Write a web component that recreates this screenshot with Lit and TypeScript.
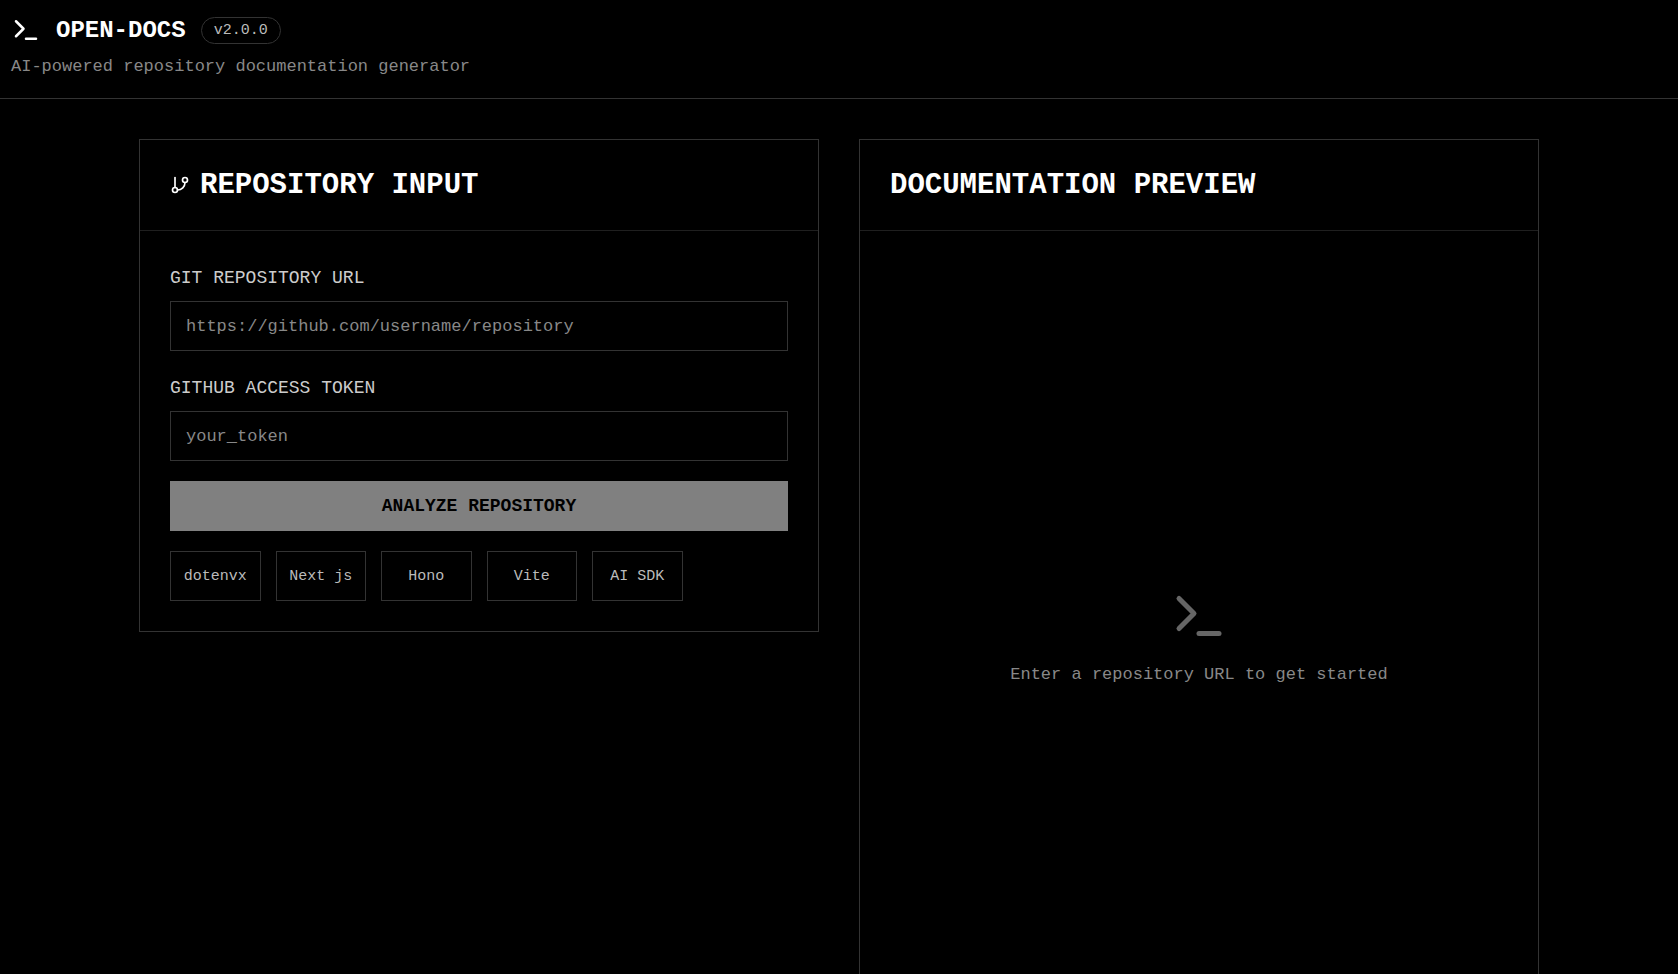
import { LitElement, html, css, svg } from "lit";
import { customElement, state } from "lit/decorators.js";

const terminalPaths = svg`
  <polyline points="4 17 10 11 4 5"></polyline>
  <line x1="12" y1="19" x2="20" y2="19"></line>
`;

const presets = ["dotenvx", "Next js", "Hono", "Vite", "AI SDK"];

@customElement("app-root")
export class AppRoot extends LitElement {
  static styles = css`
    :host {
      display: block;
      min-height: 100vh;
      background: #000;
      color: #fff;
      font-family: "Courier New", "Liberation Mono", monospace;
      font-size: 17px;
      line-height: 25px;
    }
    * {
      box-sizing: border-box;
    }
    h1,
    h2,
    p {
      margin: 0;
    }
    .icon {
      flex: none;
      fill: none;
      stroke: currentColor;
      stroke-width: 2;
      stroke-linecap: round;
      stroke-linejoin: round;
    }
    .icon-brand {
      width: 30px;
      height: 30px;
    }
    .icon-branch {
      width: 20px;
      height: 20px;
    }
    .icon-empty {
      width: 60px;
      height: 60px;
      color: #666;
    }
    .header {
      padding: 14px 11px 19px;
      border-bottom: 1px solid #333;
    }
    .brand {
      display: flex;
      align-items: center;
      gap: 15px;
    }
    .brand-name {
      padding-top: 2px;
      font-size: 24px;
      line-height: 30px;
    }
    .version {
      padding: 0 12px;
      border: 1px solid #333;
      border-radius: 14px;
      color: #bbb;
      font-size: 15px;
    }
    .tagline {
      margin-top: 8px;
      color: #888;
    }
    .main {
      display: grid;
      grid-template-columns: 1fr 1fr;
      align-items: start;
      gap: 40px;
      width: 100%;
      max-width: 1480px;
      margin: 0 auto;
      padding: 40px;
    }
    .card {
      min-width: 0;
      border: 1px solid #333;
    }
    .card-head {
      display: flex;
      align-items: center;
      gap: 10px;
      padding: 29px 30px;
      border-bottom: 1px solid #1f1f1f;
    }
    .card-title {
      padding-top: 2px;
      font-size: 29px;
      line-height: 30px;
    }
    .card-body {
      padding: 30px;
    }
    .form {
      display: flex;
      flex-direction: column;
      gap: 20px;
    }
    .field {
      display: flex;
      flex-direction: column;
      gap: 10px;
      padding-top: 5px;
    }
    .label {
      color: #ccc;
      font-size: 18px;
    }
    .input {
      width: 100%;
      height: 50px;
      padding: 0 15px;
      border: 1px solid #333;
      border-radius: 0;
      outline: none;
      background: #000;
      color: #fff;
      font: inherit;
    }
    .input::placeholder {
      color: #888;
      opacity: 1;
    }
    .input:focus {
      border-color: #fff;
    }
    .submit {
      height: 50px;
      padding: 0 15px;
      border: 0;
      background: #fff;
      color: #000;
      font: inherit;
      font-size: 18px;
      font-weight: bold;
      cursor: pointer;
    }
    .submit:disabled {
      background: #808080;
      cursor: default;
    }
    .presets {
      display: grid;
      grid-template-columns: repeat(6, 1fr);
      gap: 15px;
    }
    .preset {
      height: 50px;
      padding: 0;
      border: 1px solid #333;
      background: #000;
      color: #bbb;
      font: inherit;
      font-size: 15px;
      white-space: nowrap;
      cursor: pointer;
    }
    .empty {
      display: flex;
      flex-direction: column;
      align-items: center;
      justify-content: center;
      gap: 16px;
      min-height: 750px;
      color: #888;
      text-align: center;
    }
    @media (max-width: 1000px) {
      .main {
        grid-template-columns: 1fr;
        padding: 20px;
      }
      .presets {
        grid-template-columns: repeat(3, 1fr);
      }
    }
  `;

  @state() private url = "";

  private onUrl(event: Event) {
    this.url = (event.target as HTMLInputElement).value;
  }

  render() {
    return html`
      <header class="header">
        <div class="brand">
          <svg class="icon icon-brand" viewBox="0 0 24 24" aria-hidden="true">${terminalPaths}</svg>
          <h1 class="brand-name">OPEN-DOCS</h1>
          <span class="version">v2.0.0</span>
        </div>
        <p class="tagline">AI-powered repository documentation generator</p>
      </header>
      <main class="main">
        <section class="card">
          <div class="card-head">
            <svg class="icon icon-branch" viewBox="0 0 24 24" aria-hidden="true">
              <line x1="6" y1="3" x2="6" y2="15"></line>
              <circle cx="18" cy="6" r="3"></circle>
              <circle cx="6" cy="18" r="3"></circle>
              <path d="M18 9a9 9 0 0 1-9 9"></path>
            </svg>
            <h2 class="card-title">REPOSITORY INPUT</h2>
          </div>
          <form class="card-body form" @submit=${(e: Event) => e.preventDefault()}>
            <div class="field">
              <label class="label" for="repo-url">GIT REPOSITORY URL</label>
              <input
                class="input"
                id="repo-url"
                type="url"
                placeholder="https://github.com/username/repository"
                .value=${this.url}
                @input=${this.onUrl}
              />
            </div>
            <div class="field">
              <label class="label" for="token">GITHUB ACCESS TOKEN</label>
              <input class="input" id="token" type="password" placeholder="your_token" />
            </div>
            <button class="submit" type="submit" ?disabled=${!this.url}>ANALYZE REPOSITORY</button>
            <div class="presets">
              ${presets.map((name) => html`<button class="preset" type="button">${name}</button>`)}
            </div>
          </form>
        </section>
        <section class="card">
          <div class="card-head">
            <h2 class="card-title">DOCUMENTATION PREVIEW</h2>
          </div>
          <div class="card-body">
            <div class="empty">
              <svg class="icon icon-empty" viewBox="0 0 24 24" aria-hidden="true">${terminalPaths}</svg>
              <p>Enter a repository URL to get started</p>
            </div>
          </div>
        </section>
      </main>
    `;
  }
}
